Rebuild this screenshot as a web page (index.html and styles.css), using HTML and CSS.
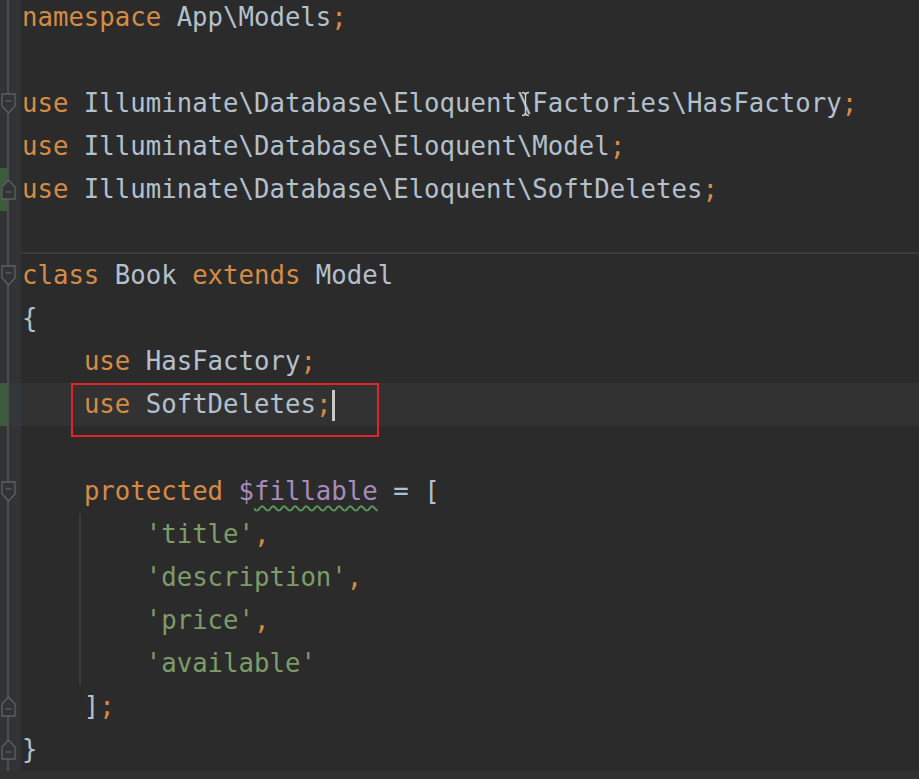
FILE: index.html
```html
<!DOCTYPE html>
<html lang="en">
<head>
    <meta charset="UTF-8">
    <meta name="viewport" content="width=device-width, initial-scale=1.0">
    <title>Book.php</title>
    <link rel="stylesheet" href="styles.css">
</head>
<body>
    <div class="screen">
        <div class="editor">
            <div class="line"><div class="gut"></div><div class="code"><span class="kw">namespace</span> App\Models<span class="kw">;</span></div></div>
            <div class="line"><div class="gut"></div><div class="code"></div></div>
            <div class="line"><div class="gut"><svg class="fold" viewBox="0 0 15 21"><path d="M1 1H14V13L7.5 20L1 13Z"/><path d="M4.5 8H10.5"/></svg></div><div class="code"><span class="kw">use</span> Illuminate\Database\Eloquent\Factories\HasFactory<span class="kw">;</span></div></div>
            <div class="line"><div class="gut"></div><div class="code"><span class="kw">use</span> Illuminate\Database\Eloquent\Model<span class="kw">;</span></div></div>
            <div class="line changed"><div class="gut"><svg class="fold" viewBox="0 0 15 21"><path d="M1 20H14V8L7.5 1L1 8Z"/><path d="M4.5 13H10.5"/></svg></div><div class="code"><span class="kw">use</span> Illuminate\Database\Eloquent\SoftDeletes<span class="kw">;</span></div></div>
            <div class="line"><div class="gut"></div><div class="code split"></div></div>
            <div class="line"><div class="gut"><svg class="fold" viewBox="0 0 15 21"><path d="M1 1H14V13L7.5 20L1 13Z"/><path d="M4.5 8H10.5"/></svg></div><div class="code"><span class="kw">class</span> Book <span class="kw">extends</span> Model</div></div>
            <div class="line"><div class="gut"></div><div class="code">{</div></div>
            <div class="line"><div class="gut"></div><div class="code">    <span class="kw">use</span> HasFactory<span class="kw">;</span></div></div>
            <div class="line changed current"><div class="gut"></div><div class="code">    <span class="kw">use</span> SoftDeletes<span class="kw">;</span><span class="caret"></span></div></div>
            <div class="line"><div class="gut"></div><div class="code"></div></div>
            <div class="line"><div class="gut"><svg class="fold" viewBox="0 0 15 21"><path d="M1 1H14V13L7.5 20L1 13Z"/><path d="M4.5 8H10.5"/></svg></div><div class="code">    <span class="kw">protected</span> <span class="var">$<span class="typo">fillable</span></span> = [</div></div>
            <div class="line"><div class="gut"></div><div class="code guide">        <span class="str">'title'</span><span class="kw">,</span></div></div>
            <div class="line"><div class="gut"></div><div class="code guide">        <span class="str">'description'</span><span class="kw">,</span></div></div>
            <div class="line"><div class="gut"></div><div class="code guide">        <span class="str">'price'</span><span class="kw">,</span></div></div>
            <div class="line"><div class="gut"></div><div class="code guide">        <span class="str">'available'</span></div></div>
            <div class="line"><div class="gut"><svg class="fold" viewBox="0 0 15 21"><path d="M1 20H14V8L7.5 1L1 8Z"/><path d="M4.5 13H10.5"/></svg></div><div class="code">    ]<span class="kw">;</span></div></div>
            <div class="line"><div class="gut"><svg class="fold" viewBox="0 0 15 21"><path d="M1 20H14V8L7.5 1L1 8Z"/><path d="M4.5 13H10.5"/></svg></div><div class="code">}</div></div>
        </div>
        <div class="scrollbar"></div>

        <div class="highlight-box"></div>
        <svg class="ibeam" viewBox="0 0 9 26"><path d="M1 1.5C3 1.5 4.5 2 4.5 4V22C4.5 24 3 24.5 1 24.5M8 1.5C6 1.5 4.5 2 4.5 4M8 24.5C6 24.5 4.5 24 4.5 22"/></svg>
    </div>
</body>
</html>
```

FILE: styles.css
```css
body {
    margin: 0;
    background-color: #2b2b2b;
    overflow: hidden;
}
.screen {
    position: relative;
    width: 919px;
    height: 779px;
    overflow: hidden;
    background-color: #2b2b2b;
}
.editor {
    margin-top: -4.5px;
    font-family: 'DejaVu Sans Mono', 'Liberation Mono', monospace;
    font-size: 25.7px;
    color: #b3c0cd;
}
.line {
    display: flex;
    height: 43.1px;
}
.gut {
    flex: 0 0 21px;
    display: flex;
    align-items: center;
    padding-left: 1px;
    box-sizing: border-box;
    background-color: #313335;
    background-image: linear-gradient(to right, transparent 7px, #4b4d4e 7px, #4b4d4e 9px, transparent 9px);
}
.changed .gut {
    background-image:
        linear-gradient(to right, transparent 7px, #4b4d4e 7px, #4b4d4e 9px, transparent 9px),
        linear-gradient(to right, #3d5a3d 7px, transparent 7px);
}
.current .gut {
    background-color: #35383a;
}
.fold {
    flex: none;
    display: block;
    width: 15px;
    height: 21px;
    fill: #313335;
    stroke: #5e6062;
    stroke-width: 1.3;
}
.code {
    flex: 1;
    padding-left: 1px;
    line-height: 43.1px;
    white-space: pre;
}
.current .code {
    background-color: #323232;
}
.split {
    box-shadow: inset 0 -2px 0 #3b3b3b;
}
.guide {
    background-image: linear-gradient(to right, transparent 58px, #3a3a3a 58px, #3a3a3a 60px, transparent 60px);
}
.kw {
    color: #d68b45;
}
.str {
    color: #7d9c69;
}
.var {
    color: #a78bbb;
}
.typo {
    text-decoration: underline wavy #5c9a5c;
    text-decoration-thickness: 1.5px;
    text-underline-offset: 5px;
}
.caret {
    display: inline-block;
    width: 3px;
    height: 31px;
    margin-left: 1px;
    vertical-align: middle;
    background-color: #c8c8c8;
}
.scrollbar {
    height: 12px;
    background-color: #313131;
}
.highlight-box {
    position: absolute;
    left: 71px;
    top: 383px;
    width: 304px;
    height: 50px;
    border: 2px solid #e3242b;
}
.ibeam {
    position: absolute;
    left: 521px;
    top: 91px;
    width: 9px;
    height: 26px;
    fill: none;
    stroke: #d0d0d0;
    stroke-width: 1.4;
}
```
